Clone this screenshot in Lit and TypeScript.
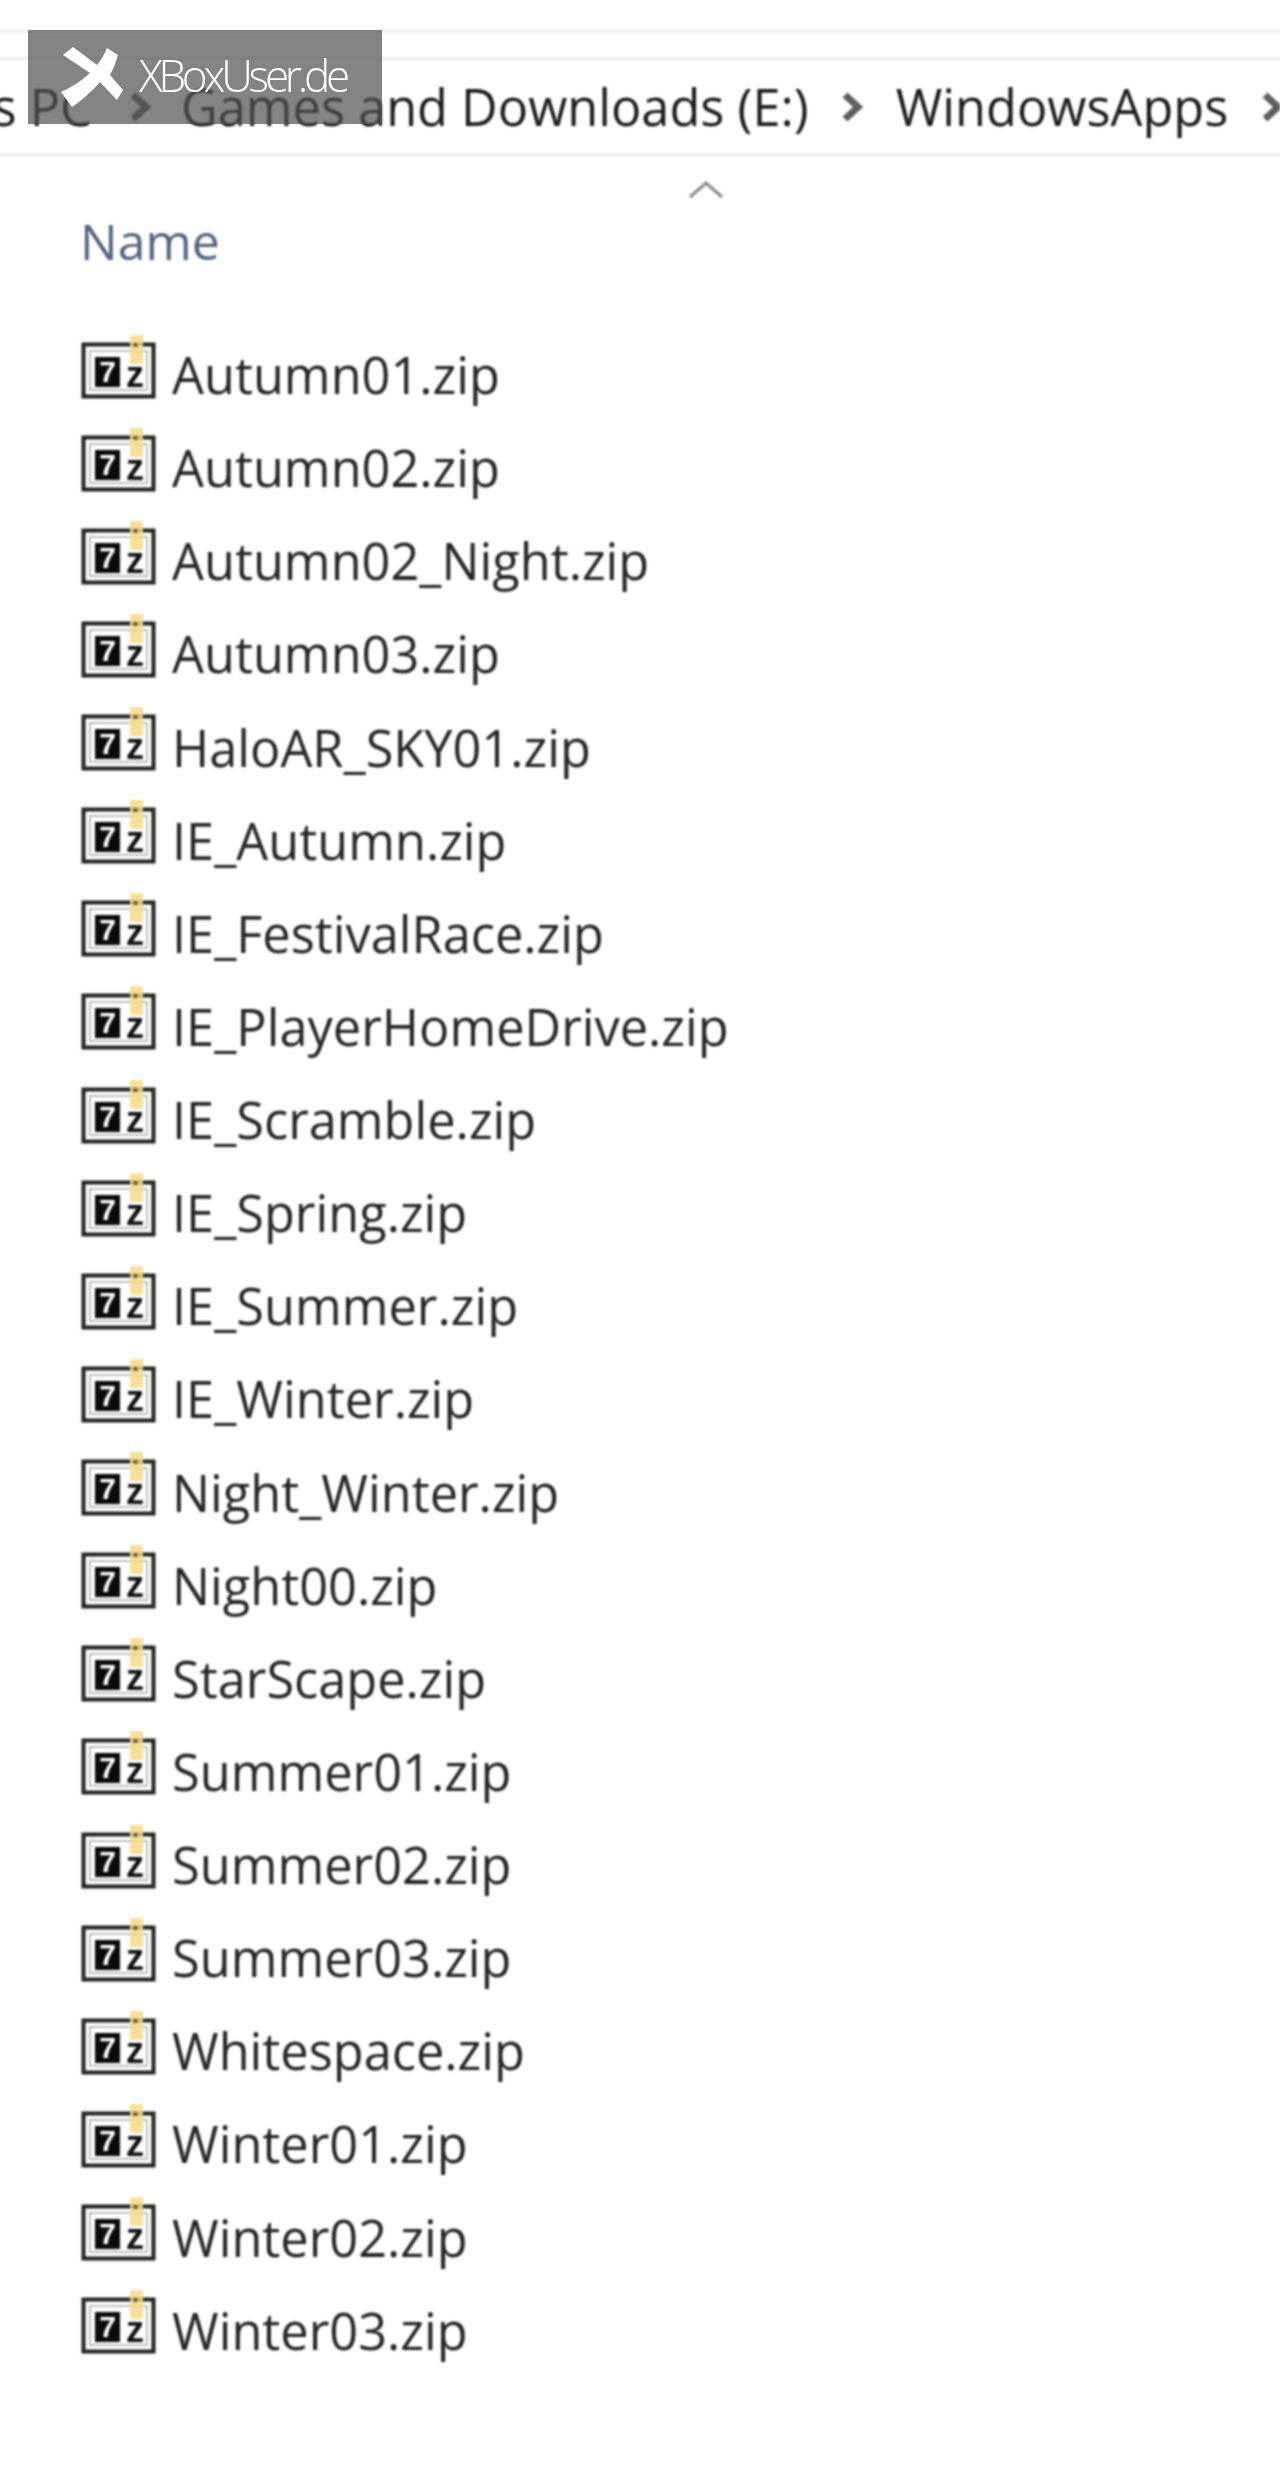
import { LitElement, html, css, svg } from "lit";
import { customElement } from "lit/decorators.js";

const FILES = [
  "Autumn01.zip","Autumn02.zip","Autumn02_Night.zip","Autumn03.zip","HaloAR_SKY01.zip","IE_Autumn.zip",
  "IE_FestivalRace.zip","IE_PlayerHomeDrive.zip","IE_Scramble.zip","IE_Spring.zip","IE_Summer.zip","IE_Winter.zip",
  "Night_Winter.zip","Night00.zip","StarScape.zip","Summer01.zip","Summer02.zip","Summer03.zip","Whitespace.zip",
  "Winter01.zip","Winter02.zip","Winter03.zip",
];

const chevron = svg`<svg class="chev" viewBox="0 0 22 30" width="22" height="30"><path d="M4 3 L17 15 L4 27" fill="none" stroke="#5f5f5f" stroke-width="7"/></svg>`;

const icon = svg`<svg class="icon" viewBox="0 0 76 66" width="76" height="66">
  <rect x="2.5" y="10.5" width="70" height="52" fill="#fff" stroke="#222" stroke-width="4"/>
  <rect x="9" y="17" width="57" height="39" fill="none" stroke="#aaa" stroke-width="1.5"/>
  <rect x="14" y="23" width="25" height="30" fill="#0a0a0a"/>
  <text x="26.5" y="48" text-anchor="middle" class="seven">7</text>
  <text x="54" y="53" text-anchor="middle" class="zed">z</text>
  <rect x="49" y="1" width="13" height="29" fill="#f6dc88" opacity="0.85"/>
  <rect x="52.5" y="9" width="4" height="4" fill="#6b5a2a"/>
</svg>`;

@customElement("app-root")
export class AppRoot extends LitElement {
  static styles = css`
    :host { display: block; width: 1280px; height: 2467px; overflow: hidden; background: #fff; position: relative;
      font-family: "Open Sans", "Noto Sans", sans-serif; }
    .page { filter: blur(1px); padding-top: 30px; }
    .rule { height: 3px; background: #ececec; }
    .gap { height: 24px; }
    .crumbs { height: 93px; display: flex; align-items: center; overflow: hidden; white-space: nowrap;
      font-size: 50.5px; color: #1c1c1c; margin-left: -79px; }
    .crumb { flex: none; }
    .sep { flex: none; display: flex; justify-content: center; width: 82px; }
    .sep.wide { width: 87px; }
    .crumbs .pc { width: 178px; }
    .sort { height: 46px; padding: 25px 0 0 689px; box-sizing: border-box; }
    .name { padding-left: 80px; font-size: 50px; line-height: 66px; color: #566480; height: 66px; margin-top: 6px; }
    .list { margin-top: 50px; display: grid; grid-auto-rows: 93.14px; padding-left: 81px; }
    .row { display: flex; align-items: center; gap: 15px; color: #262626; font-size: 50.5px; line-height: 93px; }
    .row span { position: relative; top: 4px; }
    .icon { flex: none; margin-top: -8px; filter: blur(0.5px); }
    .seven { font: 700 30px "Liberation Sans", sans-serif; fill: #fff; }
    .zed { font: 700 36px "Liberation Sans", sans-serif; fill: #111; }
    .mark { position: absolute; left: 28px; top: 30px; width: 354px; height: 94px; background: rgba(80,80,80,0.7);
      color: #fff; }
    .mark svg { position: absolute; left: 33px; top: 17px; }
    .mark b { position: absolute; left: 111px; top: 15px; font-weight: 300; font-size: 44px; line-height: 60px; letter-spacing: -4.2px; white-space: nowrap; }
  `;
  render() {
    return html`
      <div class="page">
        <div class="rule"></div>
        <div class="gap"></div>
        <div class="rule"></div>
        <div class="crumbs">
          <span class="crumb pc">This PC</span>
          <span class="sep">${chevron}</span>
          <span class="crumb">Games and Downloads (E:)</span>
          <span class="sep wide">${chevron}</span>
          <span class="crumb">WindowsApps</span>
          <span class="sep wide">${chevron}</span>
        </div>
        <div class="rule"></div>
        <div class="sort"><svg viewBox="0 0 34 18" width="34" height="18"><path d="M1 16 L17 2 L33 16" fill="none" stroke="#8a8a8a" stroke-width="3"/></svg></div>
        <div class="name">Name</div>
        <div class="list">
          ${FILES.map((f) => html`<div class="row">${icon}<span>${f}</span></div>`)}
        </div>
      </div>
      <div class="mark">
        <svg viewBox="0 0 64 62" width="64" height="62"><path d="M2 8 L12 0 L36 18 Q42 11 46 1 L57 8 Q54 19 49 28 L62 43 L56 53 L39 35 Q26 50 11 60 L0 45 Q16 38 29 26 Z" fill="#fff"/></svg>
        <b>XBoxUser.de</b>
      </div>
    `;
  }
}
